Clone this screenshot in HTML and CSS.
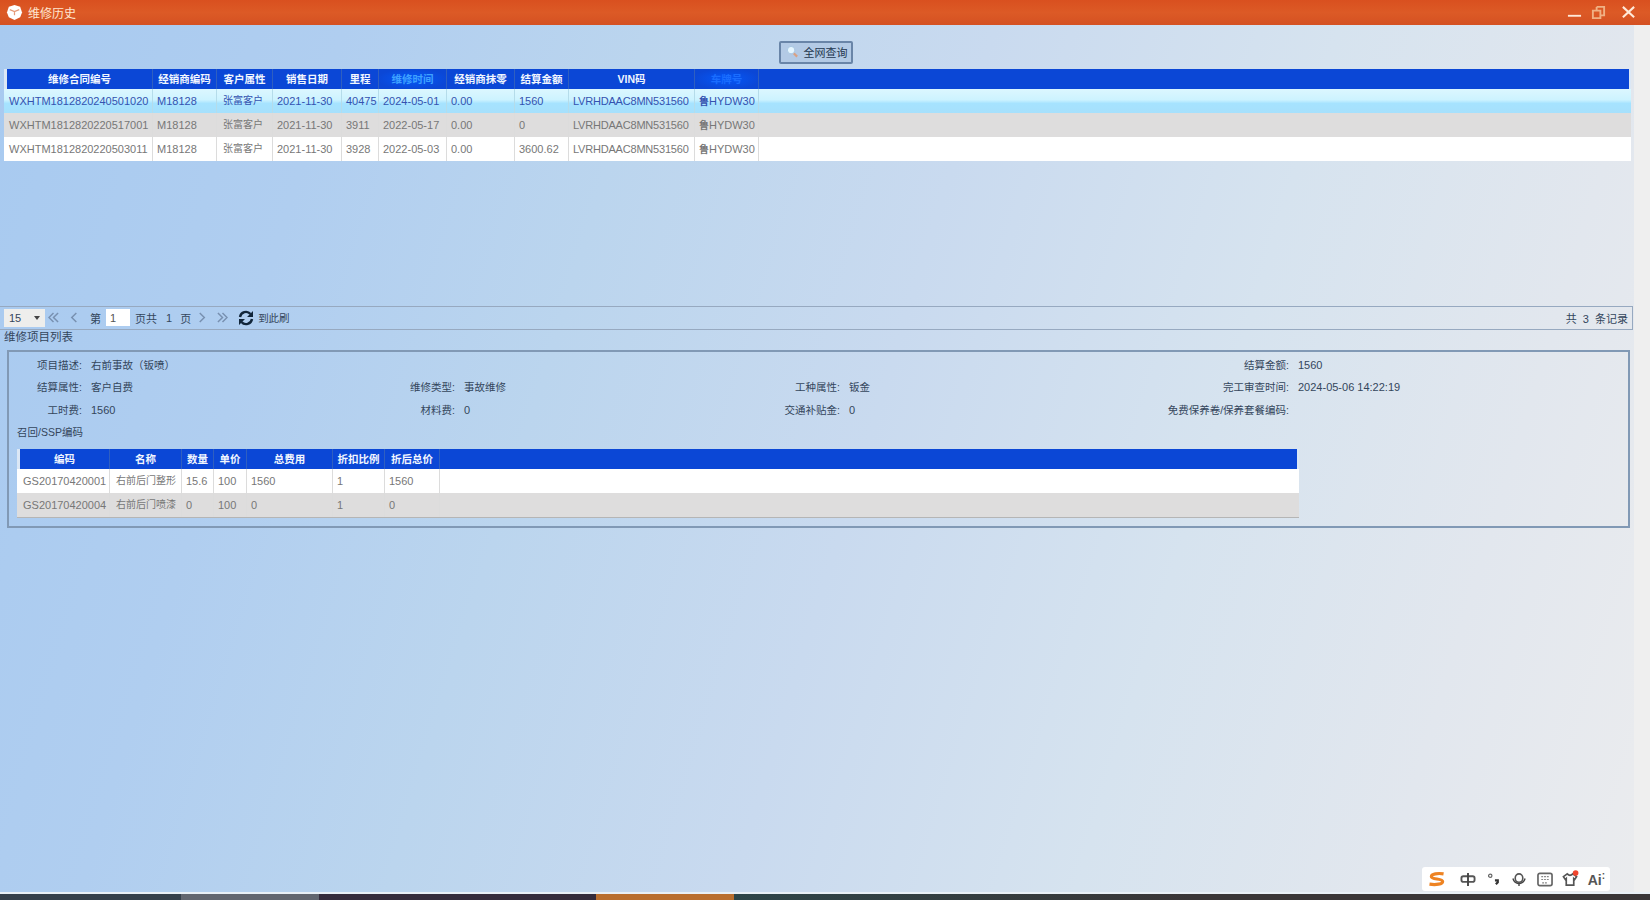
FILE: index.html
```
<!DOCTYPE html>
<html lang="zh-CN">
<head>
    <meta charset="UTF-8">
    <meta name="viewport" content="width=device-width, initial-scale=1.0">
    <title>维修历史</title>
    <link rel="stylesheet" href="styles.css">
</head>
<body>
    <header class="titlebar">
        <svg class="logo" viewBox="0 0 18 18">
            <path d="M9 1 L15 3 L17 9 L15 14 L9 17 L3 14 L1 9 L3 3 Z" fill="#fff"/>
            <path d="M4 6 L9 8 L14 6 M9 8 V12" fill="none" stroke="#e59a78" stroke-width="1.3"/>
        </svg>
        <h1>维修历史</h1>
        <div class="window-buttons">
            <svg viewBox="0 0 16 16"><path d="M1 11.5 H15" stroke="#ffe9d8" stroke-width="2"/></svg>
            <svg viewBox="0 0 16 16"><path d="M6 2 H14 V11 H11 M2 6 H10 V14 H2 Z M6 2 V6" fill="none" stroke="#f0b184" stroke-width="2"/></svg>
            <svg viewBox="0 0 16 16"><path d="M2 2 L14 13 M14 2 L2 13" stroke="#ffe9d8" stroke-width="2.2"/></svg>
        </div>
    </header>

    <main class="page">
        <div class="content">
            <div class="toolbar">
                <button class="search-btn">
                    <svg viewBox="0 0 14 14"><path d="M8 8 L12 12" stroke="#d9a184" stroke-width="2.4"/><circle cx="5.5" cy="5" r="4" fill="#e6f6ff" stroke="#a5c5e0"/></svg>
                    <span>全网查询</span>
                </button>
            </div>

            <div class="history">
                <table class="grid">
                    <colgroup>
                        <col class="w-contract"><col class="w-dealer"><col class="w-type"><col class="w-sale"><col class="w-mile">
                        <col class="w-date"><col class="w-fee"><col class="w-total"><col class="w-vin"><col class="w-plate"><col>
                    </colgroup>
                    <thead>
                        <tr>
                            <th>维修合同编号</th><th>经销商编码</th><th>客户属性</th><th>销售日期</th><th>里程</th>
                            <th class="sorted">维修时间</th><th>经销商抹零</th><th>结算金额</th><th>VIN码</th><th class="sorted dim">车牌号</th><th></th>
                        </tr>
                    </thead>
                    <tbody>
                        <tr class="selected">
                            <td>WXHTM1812820240501020</td><td>M18128</td><td class="cn">张富客户</td><td>2021-11-30</td><td>40475</td>
                            <td>2024-05-01</td><td>0.00</td><td>1560</td><td class="vin">LVRHDAAC8MN531560</td><td><b>鲁</b>HYDW30</td><td></td>
                        </tr>
                        <tr>
                            <td>WXHTM1812820220517001</td><td>M18128</td><td class="cn">张富客户</td><td>2021-11-30</td><td>3911</td>
                            <td>2022-05-17</td><td>0.00</td><td>0</td><td class="vin">LVRHDAAC8MN531560</td><td><b>鲁</b>HYDW30</td><td></td>
                        </tr>
                        <tr>
                            <td>WXHTM1812820220503011</td><td>M18128</td><td class="cn">张富客户</td><td>2021-11-30</td><td>3928</td>
                            <td>2022-05-03</td><td>0.00</td><td>3600.62</td><td class="vin">LVRHDAAC8MN531560</td><td><b>鲁</b>HYDW30</td><td></td>
                        </tr>
                    </tbody>
                </table>
            </div>

            <div class="pager">
                <div class="page-size">15<i></i></div>
                <svg class="arrow first" viewBox="0 0 12 12"><path d="M6 1 L1 6 L6 11 M11 1 L6 6 L11 11"/></svg>
                <svg class="arrow prev" viewBox="0 0 12 12"><path d="M8 1 L3 6 L8 11"/></svg>
                <span class="page-label">第</span>
                <input class="page-input" type="text" value="1">
                <span class="page-total">页共</span>
                <span class="page-count">1</span>
                <span class="page-unit">页</span>
                <svg class="arrow next" viewBox="0 0 12 12"><path d="M3 1 L8 6 L3 11"/></svg>
                <svg class="arrow last" viewBox="0 0 12 12"><path d="M1 1 L6 6 L1 11 M6 1 L11 6 L6 11"/></svg>
                <svg class="refresh" viewBox="0 0 16 16">
                    <path d="M2 7 A6 6 0 0 1 12.5 4 M14 9 A6 6 0 0 1 3.5 12" fill="none" stroke="#12263a" stroke-width="2.4"/>
                    <path d="M15 1 V7 H9 Z M1 15 V9 H7 Z" fill="#12263a"/>
                </svg>
                <span class="jump">到此刷</span>
                <span class="records">共&nbsp; 3 &nbsp;条记录</span>
            </div>

            <h2>维修项目列表</h2>
            <section class="detail">
                <dl class="info">
                    <dt>项目描述:</dt><dd>右前事故（钣喷）</dd><dt></dt><dd></dd><dt></dt><dd></dd><dt>结算金额:</dt><dd class="num">1560</dd>
                    <dt>结算属性:</dt><dd>客户自费</dd><dt>维修类型:</dt><dd>事故维修</dd><dt>工种属性:</dt><dd>钣金</dd><dt>完工审查时间:</dt><dd class="num">2024-05-06 14:22:19</dd>
                    <dt>工时费:</dt><dd class="num">1560</dd><dt>材料费:</dt><dd class="num">0</dd><dt>交通补贴金:</dt><dd class="num">0</dd><dt>免费保养卷/保养套餐编码:</dt><dd></dd>
                </dl>
                <h3>召回/SSP编码</h3>
                <table class="grid parts">
                    <colgroup>
                        <col class="p-code"><col class="p-name"><col class="p-qty"><col class="p-price"><col class="p-fee"><col class="p-rate"><col class="p-after"><col>
                    </colgroup>
                    <thead>
                        <tr><th>编码</th><th>名称</th><th>数量</th><th>单价</th><th>总费用</th><th>折扣比例</th><th>折后总价</th><th></th></tr>
                    </thead>
                    <tbody>
                        <tr><td class="code">GS20170420001</td><td class="cn">右前后门整形</td><td>15.6</td><td>100</td><td>1560</td><td>1</td><td>1560</td><td></td></tr>
                        <tr><td class="code">GS20170420004</td><td class="cn">右前后门喷漆</td><td>0</td><td>100</td><td>0</td><td>1</td><td>0</td><td></td></tr>
                    </tbody>
                </table>
            </section>
        </div>
        <div class="scroll-track"></div>
    </main>

    <footer class="taskbar">
        <span class="task task-1"></span>
        <span class="task task-2"></span>
        <span class="task task-3"></span>
        <span class="task task-4"></span>
        <span class="task task-5"></span>
    </footer>

    <!-- input method bar -->
    <div class="ime">
        <svg class="ime-logo" viewBox="0 0 18 16"><path d="M16 2 C10 1 3 2 3 5 C3 8 15 7 15 10 C15 13 8 14 1 13" fill="none" stroke="#ee8322" stroke-width="3.4"/></svg>
        <svg viewBox="0 0 16 16"><rect x="1" y="4.5" width="14" height="6" rx="2" fill="none" stroke="#555" stroke-width="2"/><path d="M8 1 V15" stroke="#444" stroke-width="2"/></svg>
        <svg viewBox="0 0 16 16"><circle cx="4" cy="4" r="1.8" fill="none" stroke="#666" stroke-width="1.3"/><path d="M9 9 H12 V11 L10 13" fill="none" stroke="#333" stroke-width="2.4"/></svg>
        <svg viewBox="0 0 16 16"><rect x="4" y="2" width="8" height="9" rx="4" fill="none" stroke="#555" stroke-width="1.7"/><path d="M1.5 7 Q3 12 8 12.5 Q13 12 14.5 7 M8 12 V15" fill="none" stroke="#444" stroke-width="1.5"/></svg>
        <svg viewBox="0 0 16 16"><rect x="0.5" y="1.5" width="15" height="13" rx="2" fill="none" stroke="#666" stroke-width="1.8"/><path d="M4 5 H12 M4 8 H12 M5 11.5 H11" stroke="#888" stroke-width="1.3" stroke-dasharray="2 1"/></svg>
        <svg viewBox="0 0 16 16"><path d="M5 2 L1 5 L3 8 L4 7 V14 H12 V7 L13 8 L15 5 L11 2 Q8 5 5 2 Z" fill="none" stroke="#555" stroke-width="1.8"/><circle cx="14" cy="1" r="3" fill="#f0452d"/></svg>
        <span>Ai<sup>:</sup></span>
    </div>
</body>
</html>
```
FILE: styles.css
```
* {
    box-sizing: border-box;
}
body {
    margin: 0;
    height: 100vh;
    display: flex;
    flex-direction: column;
    overflow: hidden;
    font-family: "Liberation Sans", "Noto Sans CJK SC", sans-serif;
    font-size: 11px;
    color: #34465c;
    background: #c6d9ef;
}
h1, h2, h3, dl, dd {
    margin: 0;
    font-weight: normal;
}
.titlebar {
    height: 25px;
    display: flex;
    align-items: center;
    padding: 0 14px 0 6px;
    background: linear-gradient(#d9501f, #dc5a26 50%, #d45122);
    color: #ffe6d0;
}
.logo {
    width: 17px;
    height: 17px;
}
.titlebar h1 {
    margin-left: 5px;
    font-size: 12px;
}
.window-buttons {
    margin-left: auto;
    display: flex;
}
.window-buttons svg {
    width: 15px;
    height: 15px;
    margin-left: 15px;
}
.window-buttons svg:nth-child(2) {
    margin-left: 9px;
}
.page {
    flex: 1;
    display: flex;
    min-height: 0;
    border-bottom: 2px solid #e9f0f6;
    background: linear-gradient(107deg, #a8caf0 0%, #b0cef0 18%, #bbd5ee 34%, #c9daef 52%, #d6e3ef 70%, #e2e7ee 86%, #ebecee 100%);
}
.content {
    flex: 1;
    min-width: 0;
}
.scroll-track {
    width: 16px;
    background: #efefef;
}
.toolbar {
    height: 44px;
    display: flex;
    justify-content: center;
    align-items: flex-start;
    padding: 16px 3px 0 0;
}
.search-btn {
    width: 74px;
    height: 23px;
    display: flex;
    align-items: center;
    justify-content: space-between;
    padding: 0 3px 2px 5px;
    border: 2px solid #6985a8;
    border-radius: 2px;
    background: #b3cae5;
    color: #24374f;
    font: inherit;
    white-space: nowrap;
}
.search-btn svg {
    width: 13px;
    height: 14px;
}
.history {
    height: 237px;
    padding: 0 3px 0 4px;
}
.grid {
    width: 100%;
    table-layout: fixed;
    border-collapse: separate;
    border-spacing: 0;
    background: #fff;
}
.grid thead tr {
    background: #0b47d6;
}
.grid th {
    height: 20px;
    padding: 0;
    border-right: 1px solid #2f5fc0;
    color: #f1f6ff;
    font-size: 10.5px;
    line-height: 14px;
    white-space: nowrap;
}
.grid th:first-child {
    border-left: 3px solid #dbe7f5;
}
.grid th:last-child {
    border-right: 2px solid #dbe7f5;
}
.grid th.sorted {
    background: radial-gradient(#0458f8, #0b47d6 75%);
    color: #3fa2ff;
}
.grid th.dim {
    color: #1a6dff;
}
.grid td {
    height: 24px;
    padding: 0 0 0 4px;
    border-right: 1px solid #dcdcdc;
    color: #777;
    line-height: 14px;
    white-space: nowrap;
    overflow: hidden;
}
.grid td:first-child {
    padding-left: 5px;
}
.grid td:last-child {
    border-right: 0;
}
.grid td b {
    font-size: 10px;
}
.grid tbody tr:nth-child(even) {
    background: #dedddd;
}
.grid .selected {
    background: linear-gradient(#dcf7ff 0%, #cdf3ff 45%, #a6e3ff 60%, #a6e0fc 100%);
}
.grid .selected td {
    color: #3452b0;
    border-color: #b5dcea;
}
.grid .cn {
    padding-left: 6px;
    font-size: 10px;
}
.grid .vin {
    letter-spacing: -0.2px;
}
.grid td.code {
    padding-left: 6px;
}
.w-contract { width: 149px; }
.w-dealer { width: 64px; }
.w-type { width: 56px; }
.w-sale { width: 69px; }
.w-mile { width: 37px; }
.w-date { width: 68px; }
.w-fee { width: 68px; }
.w-total { width: 54px; }
.w-vin { width: 126px; }
.w-plate { width: 64px; }
.pager {
    height: 24px;
    display: flex;
    align-items: center;
    margin-right: 1px;
    padding: 0 4px 1px 4px;
    border: 1px solid #97a9c0;
    border-width: 1px 1px 1px 0;
    white-space: nowrap;
}
.page-size {
    width: 41px;
    height: 18px;
    display: flex;
    align-items: center;
    justify-content: space-between;
    padding: 0 5px;
    background: #eeeeec;
}
.page-size i {
    border: 3px solid transparent;
    border-top: 4px solid #444;
    border-bottom: 0;
}
.arrow {
    width: 11px;
    height: 11px;
    fill: none;
    stroke: #7890b0;
    stroke-width: 1.6;
}
.first { margin-left: 3px; }
.prev { margin-left: 10px; }
.page-label { margin-left: 10px; }
.page-input {
    width: 24px;
    height: 17px;
    margin-left: 5px;
    padding: 0 4px;
    border: 0;
    background: #fff;
    color: #555;
    font: inherit;
}
.page-total { margin-left: 5px; }
.page-count { margin-left: 9px; }
.page-unit { margin-left: 8px; }
.next { margin-left: 6px; }
.last { margin-left: 9px; }
.refresh {
    width: 16px;
    height: 16px;
    margin: 0 4px 0 10px;
}
.jump {
    font-size: 10.5px;
}
.records {
    margin-left: auto;
}
h2 {
    height: 20px;
    padding: 0 4px;
    font-size: 11.5px;
    line-height: 15px;
}
.detail {
    height: 178px;
    margin: 0 4px 0 7px;
    padding: 3px 8px 0;
    border: 2px solid #8199b5;
}
.info {
    display: grid;
    grid-template-columns: 65px 289px 66px 301px 66px 249px 182px 1fr;
    grid-auto-rows: 22.3px;
    column-gap: 9px;
    line-height: 20px;
    font-size: 10.5px;
    white-space: nowrap;
    margin-bottom: 2px;
}
.info dt {
    display: flex;
    justify-content: flex-end;
}
.info .num {
    font-size: 11px;
}
h3 {
    height: 25px;
    font-size: 10.5px;
    line-height: 16px;
}
.parts {
    width: 1282px;
    border-bottom: 1px solid #b5b5b5;
}
.p-code { width: 93px; }
.p-name { width: 72px; }
.p-qty { width: 32px; }
.p-price { width: 33px; }
.p-fee { width: 86px; }
.p-rate { width: 52px; }
.p-after { width: 55px; }
.taskbar {
    height: 6px;
    display: flex;
    background: #34383f;
}
.task-1 { width: 181px; background: #35404b; }
.task-2 { width: 138px; background: #62666f; }
.task-3 { width: 277px; background: #352c3b; }
.task-4 { width: 138px; background: #b96e2e; }
.task-5 { flex: 1; background: linear-gradient(90deg, #2e4548, #3a3637 50%); }
.ime {
    position: absolute;
    right: 40px;
    bottom: 9px;
    width: 188px;
    height: 24px;
    display: flex;
    align-items: center;
    justify-content: space-between;
    padding: 0 5px 0 6px;
    border-radius: 3px;
    background: #fff;
    color: #555;
    font-size: 14px;
    font-weight: bold;
}
.ime svg {
    width: 16px;
    height: 15px;
    overflow: visible;
}
.ime .ime-logo {
    width: 18px;
    margin-right: 5px;
}
.ime sup {
    font-size: 10px;
    line-height: 1;
}
```
